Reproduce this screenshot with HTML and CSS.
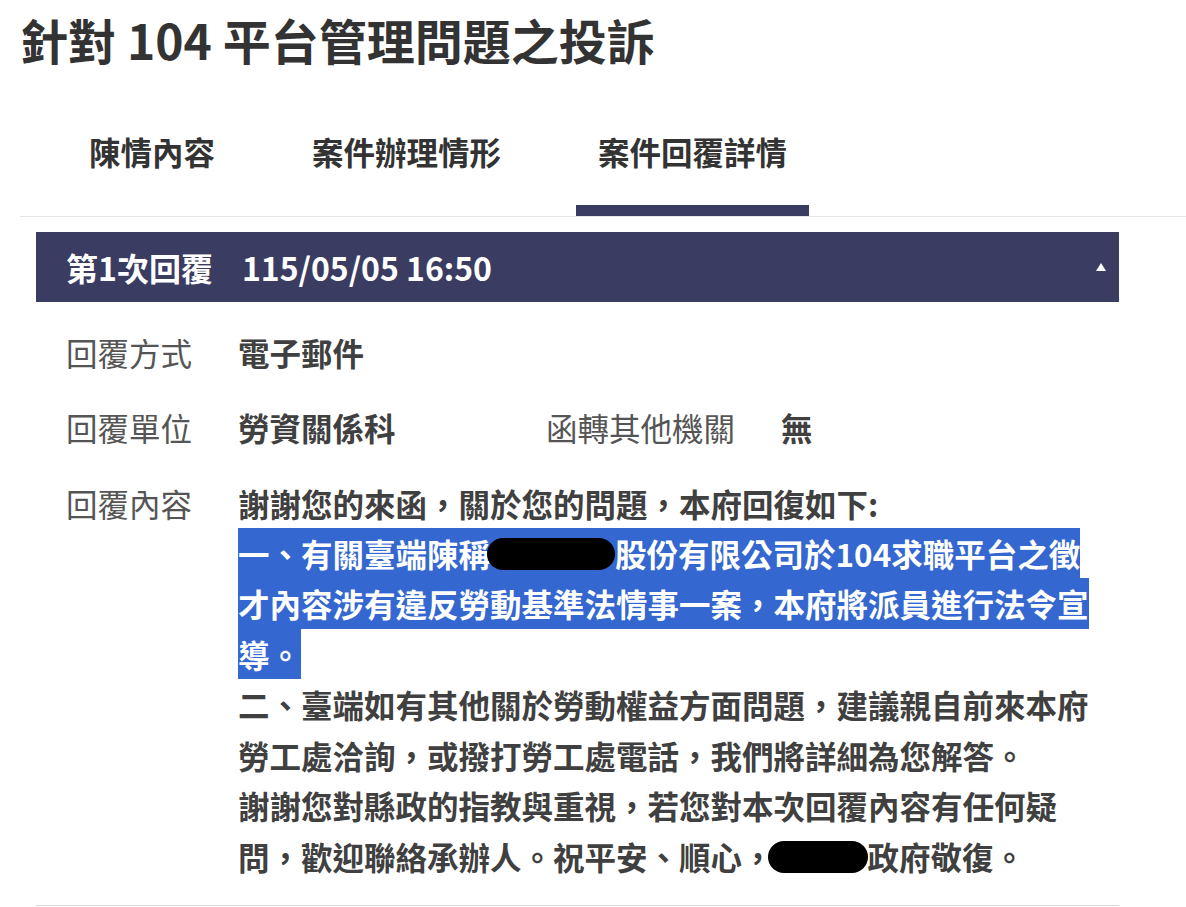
FILE: index.html
```html
<!DOCTYPE html>
<html lang="zh-Hant">
<head>
    <meta charset="UTF-8">
    <meta name="viewport" content="width=device-width, initial-scale=1.0">
    <title>針對 104 平台管理問題之投訴</title>
    <link rel="stylesheet" href="styles.css">
</head>
<body>
    <div class="page">
        <h1 class="case-title">針對 104 平台管理問題之投訴</h1>

        <div class="tabs">
            <div class="tab">陳情內容</div>
            <div class="tab">案件辦理情形</div>
            <div class="tab active">案件回覆詳情</div>
        </div>

        <div class="reply-panel">
            <div class="reply-header">
                <span class="reply-no">第1次回覆</span>
                <span class="reply-time">115/05/05 16:50</span>
                <span class="toggle"></span>
            </div>

            <div class="reply-body">
                <div class="row">
                    <div class="field">
                        <span class="label">回覆方式</span>
                        <span class="value">電子郵件</span>
                    </div>
                </div>
                <div class="row">
                    <div class="field half">
                        <span class="label">回覆單位</span>
                        <span class="value">勞資關係科</span>
                    </div>
                    <div class="field">
                        <span class="label">函轉其他機關</span>
                        <span class="value">無</span>
                    </div>
                </div>
                <div class="row">
                    <div class="field">
                        <span class="label">回覆內容</span>
                        <div class="value content">謝謝您的來函，關於您的問題，本府回復如下:<br><span class="selected">一、有關臺端陳稱<span class="redact redact-4"></span>股份有限公司於104求職平台之徵才內容涉有違反勞動基準法情事一案，本府將派員進行法令宣導。</span><br>二、臺端如有其他關於勞動權益方面問題，建議親自前來本府勞工處洽詢，或撥打勞工處電話，我們將詳細為您解答。<br>謝謝您對縣政的指教與重視，若您對本次回覆內容有任何疑問，歡迎聯絡承辦人。祝平安、順心，<span class="redact redact-3"></span>政府敬復。</div>
                    </div>
                </div>
            </div>
        </div>
    </div>
</body>
</html>
```

FILE: styles.css
```css
:root {
    --navy: #3b3c62;
    --text: #333;
    --value: #404040;
    --label: #555;
    --line: #e6e6e6;
    --select: #3467d0;
}

body {
    margin: 0;
    font-family: "Noto Sans CJK TC", "Noto Sans", sans-serif;
    color: var(--text);
    background: #fff;
}

.page {
    padding-left: 20px;
}

.case-title {
    margin: 0;
    font-size: 48px;
    line-height: 78px;
    font-weight: 700;
    color: var(--text);
}

/* tabs */
.tabs {
    display: flex;
    gap: 53px;
    padding: 48px 0 0 47px;
    border-bottom: 1px solid var(--line);
}

.tab {
    padding: 0 22px 29px;
    font-size: 31.5px;
    line-height: 50px;
    font-weight: 700;
    color: var(--text);
    border-bottom: 11px solid transparent;
}

.tab.active {
    border-bottom-color: var(--navy);
}

/* reply panel */
.reply-panel {
    width: 1083px;
    margin: 15px 0 0 16px;
    border-bottom: 1px solid #d9d9d9;
}

.reply-header {
    display: flex;
    align-items: center;
    gap: 29px;
    height: 70px;
    padding: 0 13px 0 30px;
    background: var(--navy);
    color: #fff;
    font-size: 32px;
    font-weight: 700;
}

.toggle {
    margin-left: auto;
    width: 0;
    height: 0;
    border-left: 5.5px solid transparent;
    border-right: 5.5px solid transparent;
    border-bottom: 8px solid #fff;
}

.reply-body {
    padding: 25px 15px 24px 30px;
}

.row {
    display: flex;
    margin-bottom: 25px;
}

.row:last-child {
    margin-bottom: 0;
}

.field {
    display: flex;
    align-items: flex-start;
    font-size: 31.5px;
    line-height: 50.4px;
}

.field.half {
    width: 480px;
}

.label {
    flex: none;
    margin-right: 46px;
    color: var(--label);
}

.value {
    font-weight: 700;
    color: var(--value);
}

.content {
    width: 862px;
}

.selected {
    background: var(--select);
    color: #fff;
    padding: 2.4px 0;
}

.redact {
    display: inline-block;
    height: 32px;
    background: #000;
    border-radius: 16px;
    vertical-align: -3px;
}

.redact-4 {
    width: 128px;
    margin-left: -3px;
}

.redact-3 {
    width: 100px;
    margin-left: -6px;
}
```
